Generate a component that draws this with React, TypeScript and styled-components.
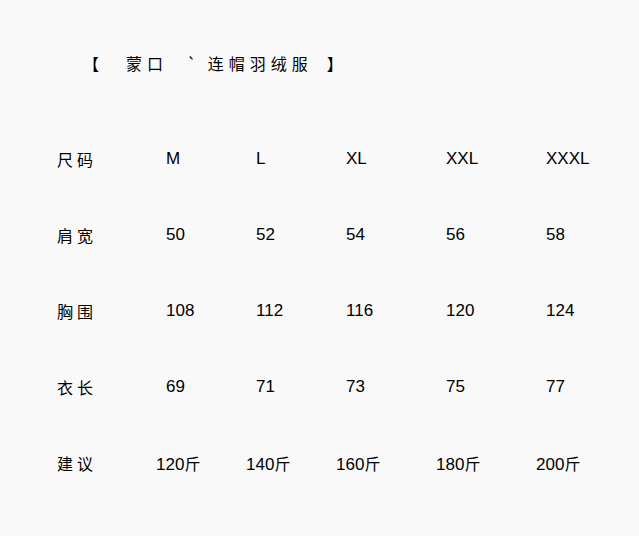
import 'react'

import styled, { createGlobalStyle } from 'styled-components'

const GlobalStyle = createGlobalStyle`
  html, body {
    margin: 0;
    padding: 0;
    background: #f9f9f9;
  }
`

const Page = styled.div`
  width: 639px;
  height: 536px;
  background: #f9f9f9;
  color: #000000;
  font-family: 'Liberation Sans', 'Noto Sans CJK SC', sans-serif;
  box-sizing: border-box;
  padding-top: 52px;
`

const Title = styled.h1`
  margin: 0 0 0 83px;
  font-family: 'Noto Sans CJK SC', sans-serif;
  font-size: 16px;
  font-weight: 400;
  line-height: 22px;
  letter-spacing: 5px;
  white-space: nowrap;
`

const Piece = styled.span<{ $after?: number }>`
  margin-right: ${p => p.$after ?? 0}px;
`

const Table = styled.div`
  margin-top: 74px;
  display: grid;
  grid-template-columns: 109px 90px 90px 100px 100px 1fr;
  grid-auto-rows: 76px;
  padding-left: 57px;
`

const Label = styled.div`
  font-family: 'Noto Sans CJK SC', sans-serif;
  font-size: 16px;
  letter-spacing: 4px;
  line-height: 22px;
`

const Cell = styled.div<{ $shift?: number }>`
  font-size: 17px;
  line-height: 22px;
  margin-left: ${p => -(p.$shift ?? 0)}px;
  white-space: nowrap;
`

const Unit = styled.span`
  font-family: 'Noto Sans CJK SC', sans-serif;
  font-size: 16px;
`

const rows: { label: string; values: string[]; unit?: boolean }[] = [
  { label: '尺码', values: ['M', 'L', 'XL', 'XXL', 'XXXL'] },
  { label: '肩宽', values: ['50', '52', '54', '56', '58'] },
  { label: '胸围', values: ['108', '112', '116', '120', '124'] },
  { label: '衣长', values: ['69', '71', '73', '75', '77'] },
  { label: '建议', values: ['120', '140', '160', '180', '200'], unit: true },
]

const App = () => {
  return (
    <Page>
      <GlobalStyle />
      <Title>
        <Piece $after={22}>【</Piece>
        <Piece $after={19}>蒙口</Piece>
        <Piece $after={6}>`</Piece>
        <Piece $after={14}>连帽羽绒服</Piece>
        <Piece>】</Piece>
      </Title>
      <Table>
        {rows.map(row => (
          <>
            <Label key={row.label}>{row.label}</Label>
            {row.values.map(v => (
              <Cell key={row.label + v} $shift={row.unit ? 10 : 0}>
                {v}
                {row.unit && <Unit>斤</Unit>}
              </Cell>
            ))}
          </>
        ))}
      </Table>
    </Page>
  )
}

export default App
